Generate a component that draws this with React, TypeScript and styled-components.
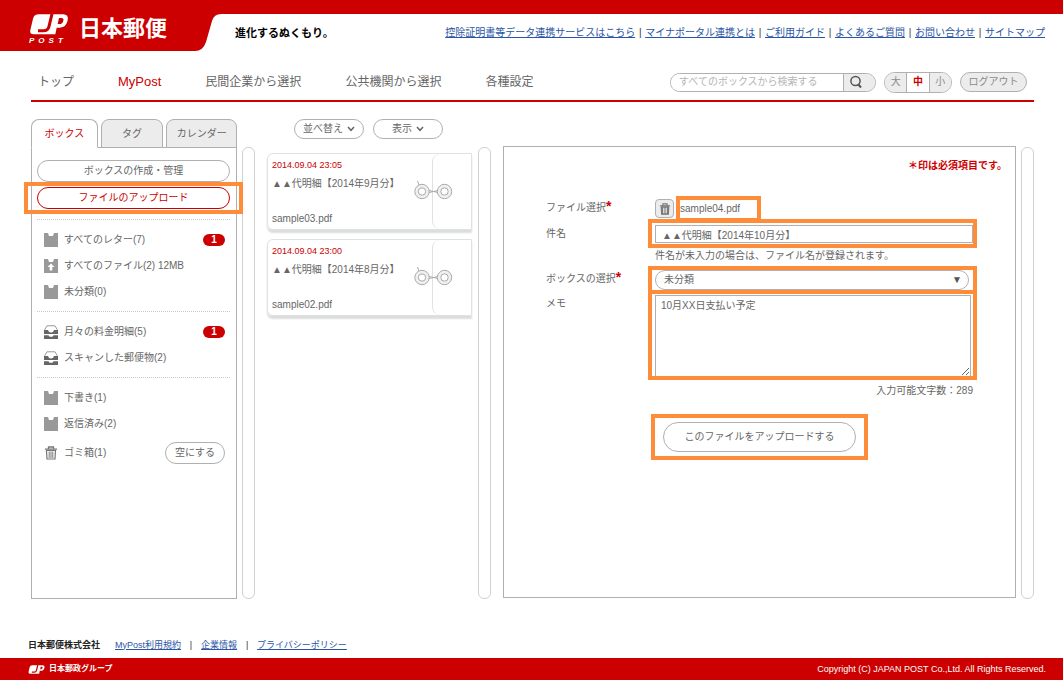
import React, { useId, useState } from "react";
import styled, { createGlobalStyle, css } from "styled-components";

const RED = "#cc0000";
const ORANGE = "#ff8c38";
const GREY = "#666666";
const LINE = "#b0b0b0";

const GlobalStyle = createGlobalStyle`
  *, *::before, *::after { box-sizing: border-box; }
  body {
    margin: 0;
    background: #fff;
    color: ${GREY};
    font-family: "Liberation Sans", "Noto Sans CJK JP", sans-serif;
    font-size: 10px;
    line-height: 14px;
  }
  button, input, select, textarea { font: inherit; color: inherit; margin: 0; }
  button { cursor: pointer; padding: 0; }
`;

const Page = styled.div`
  display: flex;
  flex-direction: column;
  min-height: 100vh;
`;

/* ---------- header ---------- */

const Header = styled.header`
  display: flex;
  height: 51px;
`;

const Brand = styled.a`
  display: flex;
  flex: none;
  gap: 10px;
  width: 195px;
  padding: 14px 0 0 29px;
  background: ${RED};
  color: #fff;
  text-decoration: none;
`;

const BrandMark = styled.span`
  display: flex;
  flex-direction: column;
  gap: 1px;
  width: 40px;
`;

const BrandPost = styled.span`
  font-size: 8px;
  line-height: 9px;
  font-weight: bold;
  font-style: italic;
  letter-spacing: 4px;
`;

const BrandName = styled.span`
  font-size: 22px;
  line-height: 30px;
  font-weight: bold;
`;

const Curve = styled.svg`
  display: block;
  flex: none;
`;

const HeaderBody = styled.div`
  display: flex;
  flex: 1;
  justify-content: space-between;
  align-items: center;
  padding: 0 18px 0 10px;
  border-top: 14px solid ${RED};
  white-space: nowrap;
`;

const Tagline = styled.p`
  margin: 0;
  color: #000;
  font-size: 11px;
  font-weight: bold;
`;

const LinkList = styled.ul`
  display: flex;
  margin: 0;
  padding: 0;
  list-style: none;
`;

const LinkItem = styled.li<{ $gap: number }>`
  display: flex;
  & + &::before {
    content: "|";
    width: ${(p) => p.$gap}px;
    text-align: center;
    color: #333;
  }
`;

const TextLink = styled.a`
  color: #2a55a5;
  text-decoration: underline;
`;

/* ---------- navigation ---------- */

const NavBar = styled.div`
  display: flex;
  align-items: center;
  justify-content: space-between;
  height: 51px;
  margin: 0 29px 0 31px;
  padding: 13px 7px 0;
  border-bottom: 2px solid ${RED};
  white-space: nowrap;
`;

const Nav = styled.nav`
  display: flex;
  gap: 44px;
`;

const NavLink = styled.a<{ $active?: boolean }>`
  font-size: ${(p) => (p.$active ? 13 : 12)}px;
  line-height: 18px;
  color: ${(p) => (p.$active ? RED : GREY)};
  text-decoration: none;
`;

const Tools = styled.div`
  display: flex;
  align-items: center;
  gap: 8px;
`;

const Search = styled.form`
  display: flex;
  width: 206px;
  height: 19px;
  border: 1px solid ${LINE};
  border-radius: 10px;
  overflow: hidden;
`;

const SearchInput = styled.input`
  flex: 1;
  min-width: 0;
  padding: 0 8px;
  border: 0;
  outline: 0;
  background: #fff;
  &::placeholder { color: #b4b4b4; opacity: 1; }
`;

const SearchButton = styled.button`
  display: flex;
  align-items: center;
  justify-content: flex-start;
  width: 32px;
  padding-left: 5px;
  border: 0;
  border-left: 1px solid ${LINE};
  background: #ececec;
`;

const SizeGroup = styled.div`
  display: flex;
  width: 68px;
  height: 21px;
  border: 1px solid ${LINE};
  border-radius: 11px;
  overflow: hidden;
`;

const SizeButton = styled.button<{ $active?: boolean }>`
  flex: 1;
  border: 0;
  background: ${(p) => (p.$active ? "#fff" : "#ececec")};
  color: ${(p) => (p.$active ? RED : "#8a8a8a")};
  font-weight: ${(p) => (p.$active ? "bold" : "normal")};
  & + & { border-left: 1px solid ${LINE}; }
`;

const LogoutButton = styled.button`
  width: 67px;
  height: 20px;
  border: 1px solid ${LINE};
  border-radius: 10px;
  background: #ececec;
  color: #8a8a8a;
`;

/* ---------- columns ---------- */

const Main = styled.main`
  display: flex;
  flex: 1;
  padding: 17px 29px 32px 31px;
`;

const Track = styled.div`
  flex: none;
  width: 13px;
  margin-top: 28px;
  border: 1px solid #d0d0d0;
  border-radius: 6px;
`;

const Sidebar = styled.aside`
  display: flex;
  flex-direction: column;
  flex: none;
  width: 206px;
  margin-right: 5px;
`;

const Tabs = styled.div`
  display: flex;
  gap: 3px;
  height: 29px;
  margin-bottom: -1px;
  z-index: 1;
`;

const Tab = styled.button<{ $active?: boolean; $width: number }>`
  flex: ${(p) => p.$width} 1 0;
  border: 1px solid ${LINE};
  border-radius: 8px 8px 0 0;
  background: ${(p) => (p.$active ? "#fff" : "#ececec")};
  color: ${(p) => (p.$active ? RED : GREY)};
  ${(p) => p.$active && css`border-bottom-color: #fff;`}
`;

const SidePanel = styled.div`
  flex: 1;
  padding: 12px 6px 12px 5px;
  border: 1px solid ${LINE};
`;

const PillButton = styled.button<{ $accent?: boolean }>`
  display: block;
  width: 100%;
  height: 22px;
  border: 1px solid ${(p) => (p.$accent ? RED : LINE)};
  border-radius: 11px;
  background: #fff;
  color: ${(p) => (p.$accent ? RED : GREY)};
`;

const Highlight = styled.div<{ $inset: string }>`
  position: relative;
  &::after {
    content: "";
    position: absolute;
    inset: ${(p) => p.$inset};
    border: 4px solid ${ORANGE};
    pointer-events: none;
  }
`;

const SideActions = styled.div`
  display: grid;
  gap: 5px;
  margin-bottom: 10px;
`;

const BoxGroup = styled.ul`
  margin: 0;
  padding: 7px 5px 6px 7px;
  border-top: 1px dotted #c8c8c8;
  list-style: none;
`;

const BoxRow = styled.li<{ $tall?: boolean }>`
  display: flex;
  align-items: center;
  gap: 6px;
  height: ${(p) => (p.$tall ? 32 : 26)}px;
`;

const BoxLink = styled.a`
  flex: 1;
  color: ${GREY};
  text-decoration: none;
  white-space: nowrap;
`;

const Badge = styled.span`
  width: 22px;
  border-radius: 7px;
  background: ${RED};
  color: #fff;
  font-weight: bold;
  line-height: 12px;
  text-align: center;
`;

const EmptyButton = styled(PillButton)`
  width: 60px;
`;

/* ---------- letter list ---------- */

const ListColumn = styled.section`
  flex: none;
  width: 205px;
  margin: 0 6px 0 12px;
`;

const ListTools = styled.div`
  display: flex;
  gap: 9px;
  margin-bottom: 14px;
  padding-left: 27px;
`;

const MenuButton = styled.button`
  display: flex;
  align-items: center;
  justify-content: center;
  gap: 4px;
  width: 70px;
  height: 20px;
  border: 1px solid ${LINE};
  border-radius: 10px;
  background: #fff;
`;

const Card = styled.article`
  position: relative;
  display: flex;
  height: 77px;
  margin-bottom: 9px;
  border: 1px solid #dde2e2;
  border-radius: 6px 0 0 6px;
  box-shadow: 0 3px 2px #dcdcdc;
`;

const CardBody = styled.div`
  display: flex;
  flex: 1;
  flex-direction: column;
  padding: 4px 0 3px 4px;
  white-space: nowrap;
`;

const CardDate = styled.time`
  margin-bottom: 5px;
  color: ${RED};
  font-size: 9px;
`;

const CardTitle = styled.h2`
  margin: 0 0 auto;
  font-size: 10px;
  font-weight: normal;
`;

const CardFlap = styled.div`
  flex: none;
  width: 39px;
  border-left: 1px solid #dde2e2;
  border-radius: 8px 0 0 8px;
`;

const Clasp = styled.svg`
  position: absolute;
  top: 27px;
  right: 18px;
`;

/* ---------- upload form ---------- */

const UploadPanel = styled.section`
  flex: 1;
  min-width: 0;
  margin: 27px 5px 1px 12px;
  padding: 12px 42px 20px;
  border: 1px solid ${LINE};
`;

const RequiredNote = styled.p`
  margin: 0 -34px 26px 0;
  color: ${RED};
  font-weight: bold;
  text-align: right;
`;

const Field = styled.div<{ $below: number }>`
  display: grid;
  grid-template-columns: 109px 1fr;
  margin-bottom: ${(p) => p.$below}px;
`;

const FieldLabel = styled.label`
  line-height: 18px;
`;

const Star = styled.span`
  color: ${RED};
  font-size: 14px;
  line-height: 0;
  font-weight: bold;
`;

const FileLine = styled.div`
  display: flex;
  align-items: center;
  gap: 6px;
  height: 19px;
`;

const IconButton = styled.button`
  display: flex;
  align-items: center;
  justify-content: center;
  width: 19px;
  height: 19px;
  border: 1px solid ${LINE};
  border-radius: 4px;
  background: #ececec;
`;

const TextInput = styled.input`
  display: block;
  width: 100%;
  height: 18px;
  padding: 0 6px;
  border: 1px solid ${LINE};
  border-radius: 0;
  background: #fff;
`;

const SelectBox = styled.select`
  display: block;
  width: calc(100% - 4px);
  height: 20px;
  padding: 0 8px;
  border: 1px solid ${LINE};
  border-radius: 10px;
  background: #fff;
  appearance: none;
`;

const SelectArrow = styled.span`
  position: absolute;
  top: 3px;
  right: 11px;
  color: #555;
  pointer-events: none;
`;

const Memo = styled.textarea`
  display: block;
  width: calc(100% - 2px);
  height: 82px;
  padding: 3px 5px;
  border: 1px solid ${LINE};
  border-radius: 0;
  background: #fff;
  resize: vertical;
`;

const Hint = styled.p`
  margin: 6px 0 0;
`;

const Counter = styled.p`
  margin: 7px 0 0;
  text-align: right;
`;

const SubmitRow = styled.div`
  display: flex;
  padding-left: 117px;
`;

const SubmitButton = styled(PillButton)`
  width: 193px;
  height: 30px;
  border-radius: 15px;
`;

/* ---------- footer ---------- */

const FooterLinks = styled.div`
  display: flex;
  align-items: center;
  gap: 15px;
  height: 27px;
  padding-left: 28px;
  font-size: 9px;
`;

const Company = styled.strong`
  color: #222;
`;

const FooterBar = styled.div`
  display: flex;
  align-items: center;
  justify-content: space-between;
  height: 22px;
  padding: 0 17px 0 28px;
  background: ${RED};
  color: #fff;
  font-size: 9px;
`;

const Group = styled.span`
  display: flex;
  align-items: center;
  gap: 4px;
  font-size: 8px;
  font-weight: bold;
`;

/* ---------- drawings ---------- */

const JpMark = ({ width }: { width: number }) => (
  <svg width={width} height={Math.round((width * 21) / 40)} viewBox="0 0 120 63" aria-hidden="true">
    <path
      fill="#fff"
      fillRule="evenodd"
      d="M30 1H102Q120 1 116 19Q112 41 92 41H83L79 61H14Q1 61 4 48L12 14Q15 1 30 1ZM90 12L86 30H91Q101 30 103 20Q105 12 97 12Z"
    />
    <path fill="none" stroke={RED} strokeWidth="9" d="M69 0L60 37Q57 50 44 50H27" />
  </svg>
);

const FolderIcon = ({ arrow }: { arrow?: boolean }) => (
  <svg width="14" height="14" viewBox="0 0 14 14" aria-hidden="true">
    <path fill="#999" d="M0 0H4L5 3H9L10 0H14V14H0Z" />
    {arrow && <path fill="#fff" d="M7 4.5L10.5 8H8.3V11.5H5.7V8H3.5Z" />}
  </svg>
);

const TrayIcon = () => (
  <svg width="14" height="14" viewBox="0 0 14 14" aria-hidden="true">
    <path fill="none" stroke="#999" d="M.8 7V4.500L3 .8H11L13.200 4.500V7" />
    <path fill="#666" d="M0 5H4Q4.500 7.500 7 7.500T10 5H14V9H0ZM0 10.300H4.500L5.500 11.800H8.500L9.500 10.300H14V14H0Z" />
  </svg>
);

const TrashIcon = ({ solid }: { solid?: boolean }) => (
  <svg width={solid ? 12 : 14} height={solid ? 12 : 14} viewBox="0 0 14 14" aria-hidden="true">
    <path fill="none" stroke="#777" strokeWidth="1.300" d="M1 3.200H13M4.500 3V1H9.500V3" />
    <path fill={solid ? "#777" : "none"} stroke="#777" strokeWidth="1.200" d="M2.500 4.500H11.500L11 13H3Z" />
    <path stroke={solid ? "#ececec" : "#777"} d="M5.200 5.500V12M7 5.500V12M8.800 5.500V12" />
  </svg>
);

const Chevron = () => (
  <svg width="8" height="6" viewBox="0 0 8 6" aria-hidden="true">
    <path fill="none" stroke="#666" strokeWidth="1.500" d="M1 1L4 4.300L7 1" />
  </svg>
);

const ClaspDrawing = () => (
  <Clasp width="39" height="20" viewBox="0 0 39 20" aria-hidden="true">
    <path stroke="#aaa" d="M3.500 0L5 4M15 9.500L24 11.500M15 11.500L24 9.500" />
    {[8, 30.5].map((cx) => (
      <g key={cx} stroke="#aaa" fill="#f0f0f0">
        <circle cx={cx} cy="10.500" r="7.200" />
        <circle cx={cx} cy="10.500" r="3.700" fill="#fff" />
      </g>
    ))}
  </Clasp>
);

/* ---------- data ---------- */

const serviceLinks = [
  "控除証明書等データ連携サービスはこちら",
  "マイナポータル連携とは",
  "ご利用ガイド",
  "よくあるご質問",
  "お問い合わせ",
  "サイトマップ",
];
const navItems = ["トップ", "MyPost", "民間企業から選択", "公共機関から選択", "各種設定"];
const tabs = [
  { name: "ボックス", width: 67 },
  { name: "タグ", width: 63 },
  { name: "カレンダー", width: 71 },
];
const letters = [
  { date: "2014.09.04 23:05", title: "▲▲代明細【2014年9月分】", file: "sample03.pdf" },
  { date: "2014.09.04 23:00", title: "▲▲代明細【2014年8月分】", file: "sample02.pdf" },
];

type Box = { name: string; icon: React.ReactNode; unread?: number; emptyable?: boolean };
const boxGroups: Box[][] = [
  [
    { name: "すべてのレター(7)", icon: <FolderIcon />, unread: 1 },
    { name: "すべてのファイル(2) 12MB", icon: <FolderIcon arrow /> },
    { name: "未分類(0)", icon: <FolderIcon /> },
  ],
  [
    { name: "月々の料金明細(5)", icon: <TrayIcon />, unread: 1 },
    { name: "スキャンした郵便物(2)", icon: <TrayIcon /> },
  ],
  [
    { name: "下書き(1)", icon: <FolderIcon /> },
    { name: "返信済み(2)", icon: <FolderIcon /> },
    { name: "ゴミ箱(1)", icon: <TrashIcon />, emptyable: true },
  ],
];

const Links = ({ items, gap }: { items: string[]; gap: number }) => (
  <LinkList>
    {items.map((item) => (
      <LinkItem key={item} $gap={gap}>
        <TextLink href="#">{item}</TextLink>
      </LinkItem>
    ))}
  </LinkList>
);

export default function App() {
  const id = useId();
  const [subject, setSubject] = useState("▲▲代明細【2014年10月分】");
  const [memo, setMemo] = useState("10月XX日支払い予定");

  return (
    <Page>
      <GlobalStyle />
      <Header>
        <Brand href="#">
          <BrandMark>
            <JpMark width={40} />
            <BrandPost>POST</BrandPost>
          </BrandMark>
          <BrandName>日本郵便</BrandName>
        </Brand>
        <Curve width="30" height="51" viewBox="0 0 30 51" aria-hidden="true">
          <path fill={RED} d="M0 0H30V14H26Q19 14 17 21L11 42Q8 51 0 51Z" />
        </Curve>
        <HeaderBody>
          <Tagline>進化するぬくもり。</Tagline>
          <Links items={serviceLinks} gap={10} />
        </HeaderBody>
      </Header>

      <NavBar>
        <Nav>
          {navItems.map((item) => (
            <NavLink key={item} href="#" $active={item === "MyPost"}>
              {item}
            </NavLink>
          ))}
        </Nav>
        <Tools>
          <Search onSubmit={(e) => e.preventDefault()}>
            <SearchInput aria-label="検索" placeholder="すべてのボックスから検索する" />
            <SearchButton aria-label="検索">
              <svg width="14" height="14" viewBox="0 0 14 14" aria-hidden="true">
                <circle cx="6.500" cy="6" r="4.600" fill="none" stroke="#555" strokeWidth="1.500" />
                <path stroke="#555" strokeWidth="2" d="M9 9L12 12.500" />
              </svg>
            </SearchButton>
          </Search>
          <SizeGroup>
            <SizeButton>大</SizeButton>
            <SizeButton $active>中</SizeButton>
            <SizeButton>小</SizeButton>
          </SizeGroup>
          <LogoutButton>ログアウト</LogoutButton>
        </Tools>
      </NavBar>

      <Main>
        <Sidebar>
          <Tabs>
            {tabs.map((tab, i) => (
              <Tab key={tab.name} $active={i === 0} $width={tab.width}>
                {tab.name}
              </Tab>
            ))}
          </Tabs>
          <SidePanel>
            <SideActions>
              <PillButton>ボックスの作成・管理</PillButton>
              <Highlight $inset="-5px -13px">
                <PillButton $accent>ファイルのアップロード</PillButton>
              </Highlight>
            </SideActions>
            {boxGroups.map((group) => (
              <BoxGroup key={group[0].name}>
                {group.map((box) => (
                  <BoxRow key={box.name} $tall={box.emptyable}>
                    {box.icon}
                    <BoxLink href="#">{box.name}</BoxLink>
                    {box.unread && <Badge>{box.unread}</Badge>}
                    {box.emptyable && <EmptyButton>空にする</EmptyButton>}
                  </BoxRow>
                ))}
              </BoxGroup>
            ))}
          </SidePanel>
        </Sidebar>
        <Track />

        <ListColumn>
          <ListTools>
            <MenuButton>並べ替え<Chevron /></MenuButton>
            <MenuButton>表示<Chevron /></MenuButton>
          </ListTools>
          {letters.map((letter) => (
            <Card key={letter.file}>
              <CardBody>
                <CardDate>{letter.date}</CardDate>
                <CardTitle>{letter.title}</CardTitle>
                <span>{letter.file}</span>
              </CardBody>
              <CardFlap />
              <ClaspDrawing />
            </Card>
          ))}
        </ListColumn>
        <Track />

        <UploadPanel>
          <RequiredNote>＊印は必須項目です。</RequiredNote>
          <form onSubmit={(e) => e.preventDefault()}>
            <Field $below={7}>
              <FieldLabel as="span">
                ファイル選択<Star>*</Star>
              </FieldLabel>
              <FileLine>
                <IconButton type="button" aria-label="ファイルを削除">
                  <TrashIcon solid />
                </IconButton>
                <Highlight $inset="-6px -21px -6px -4px">sample04.pdf</Highlight>
              </FileLine>
            </Field>
            <Field $below={7}>
              <FieldLabel htmlFor={`${id}-subject`}>件名</FieldLabel>
              <div>
                <Highlight $inset="-6px -4px -5px -7px">
                  <TextInput
                    id={`${id}-subject`}
                    value={subject}
                    onChange={(e) => setSubject(e.target.value)}
                  />
                </Highlight>
                <Hint>件名が未入力の場合は、ファイル名が登録されます。</Hint>
              </div>
            </Field>
            <Field $below={5}>
              <FieldLabel htmlFor={`${id}-box`}>
                ボックスの選択<Star>*</Star>
              </FieldLabel>
              <Highlight $inset="-4px -4px -4px -7px">
                <SelectBox id={`${id}-box`}>
                  <option>未分類</option>
                </SelectBox>
                <SelectArrow>▼</SelectArrow>
              </Highlight>
            </Field>
            <Field $below={24}>
              <FieldLabel htmlFor={`${id}-memo`}>メモ</FieldLabel>
              <div>
                <Highlight $inset="-5px -4px -3px -7px">
                  <Memo
                    id={`${id}-memo`}
                    value={memo}
                    onChange={(e) => setMemo(e.target.value)}
                  />
                </Highlight>
                <Counter>入力可能文字数：289</Counter>
              </div>
            </Field>
            <SubmitRow>
              <Highlight $inset="-8px -12px">
                <SubmitButton>このファイルをアップロードする</SubmitButton>
              </Highlight>
            </SubmitRow>
          </form>
        </UploadPanel>
        <Track />
      </Main>

      <footer>
        <FooterLinks>
          <Company>日本郵便株式会社</Company>
          <Links items={["MyPost利用規約", "企業情報", "プライバシーポリシー"]} gap={20} />
        </FooterLinks>
        <FooterBar>
          <Group>
            <JpMark width={17} />
            日本郵政グループ
          </Group>
          <span>Copyright (C) JAPAN POST Co.,Ltd. All Rights Reserved.</span>
        </FooterBar>
      </footer>
    </Page>
  );
}
